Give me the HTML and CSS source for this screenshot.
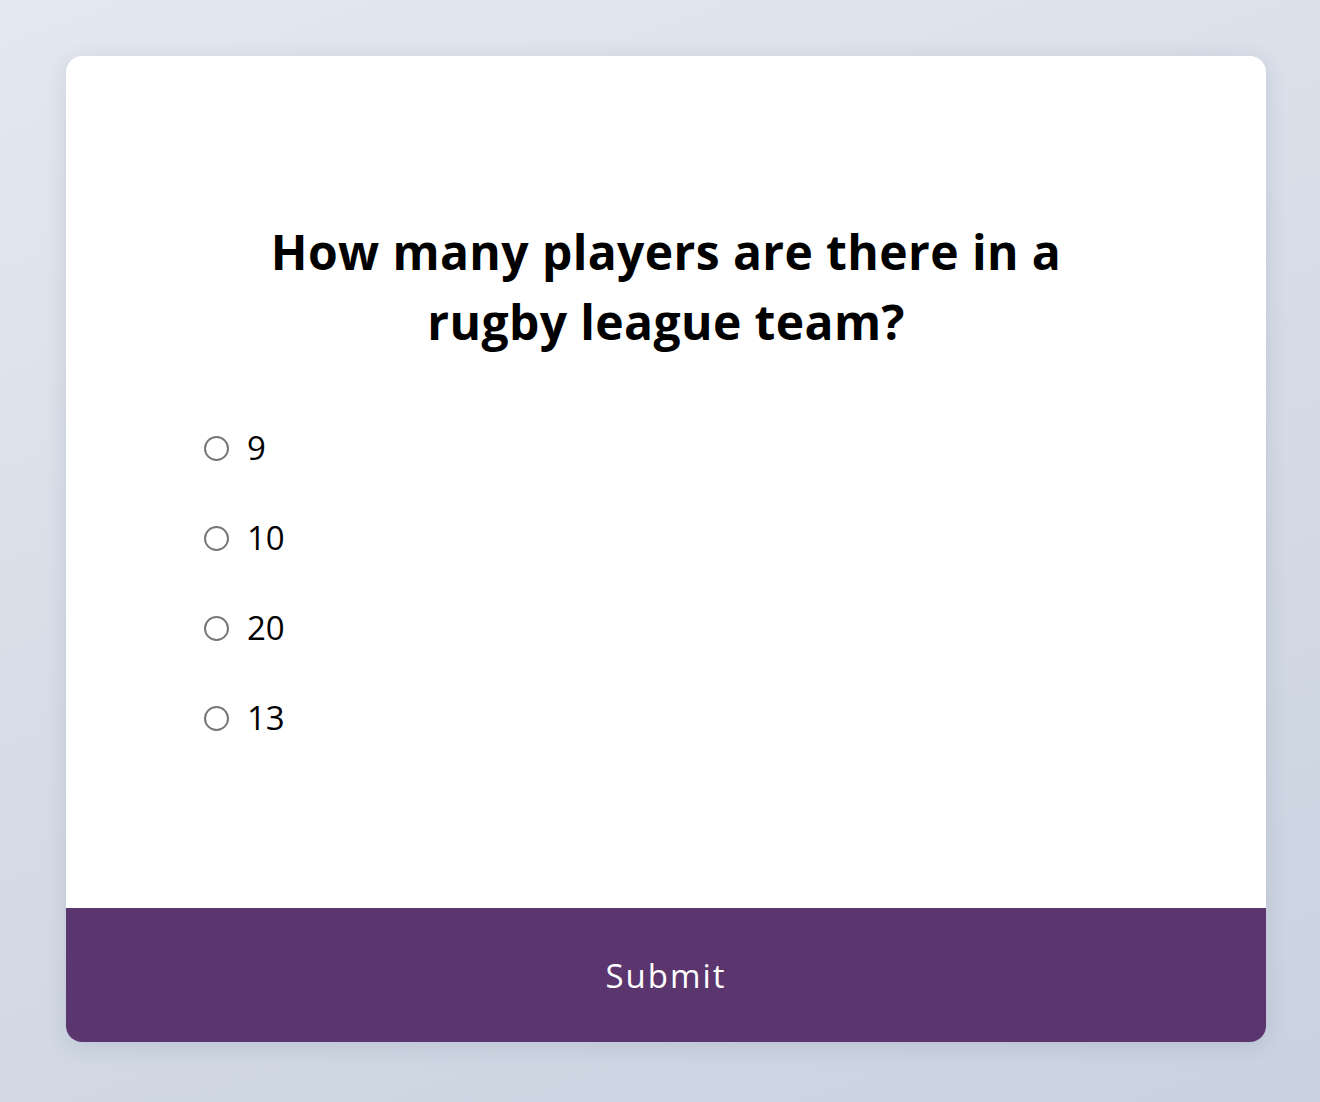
FILE: index.html
```html
<!DOCTYPE html>
<html lang="en">
<head>
<meta charset="utf-8">
<title>Quiz</title>
<link rel="stylesheet" href="styles.css">
</head>
<body>
<main class="page">
  <div class="card">
    <div class="quiz">
      <h2 class="question">How many players are there in a rugby league team?</h2>
      <ul class="answers">
        <li class="answer"><input type="radio" name="answer" id="a" class="radio"><label for="a">9</label></li>
        <li class="answer"><input type="radio" name="answer" id="b" class="radio"><label for="b">10</label></li>
        <li class="answer"><input type="radio" name="answer" id="c" class="radio"><label for="c">20</label></li>
        <li class="answer"><input type="radio" name="answer" id="d" class="radio"><label for="d">13</label></li>
      </ul>
    </div>
    <button class="submit" type="button">Submit</button>
  </div>
</main>
</body>
</html>
```

FILE: styles.css
```css
* { box-sizing: border-box; }
html, body { margin: 0; height: 100%; }
body {
  font-family: "Open Sans", "Liberation Sans", sans-serif;
  background: linear-gradient(160deg, #e4e8f0 0%, #d6dce7 50%, #cad2e0 100%);
  min-height: 1102px;
}
.page {
  padding: 56px 0 0 12px;
  display: flex;
  justify-content: center;
}
.card {
  width: 1200px;
  background: #fff;
  border-radius: 16px;
  box-shadow: 0 4px 22px rgba(60, 70, 100, 0.14);
  overflow: hidden;
}
.quiz {
  padding: 161px 138px 166px;
}
.question {
  margin: 0;
  text-align: center;
  font-size: 48px;
  line-height: 70px;
  font-weight: 700;
  color: #000;
  letter-spacing: 0.4px;
  padding: 0 56px;
}
.answers {
  list-style: none;
  margin: 67px 0 0;
  padding: 0;
  display: flex;
  flex-direction: column;
  gap: 42px;
}
.answer {
  display: flex;
  align-items: center;
  height: 48px;
  font-size: 33px;
  line-height: 48px;
  color: #000;
}
.radio {
  appearance: none;
  -webkit-appearance: none;
  width: 25px;
  height: 25px;
  margin: 0 18px 0 0;
  border: 2px solid #777;
  border-radius: 50%;
  background: #fff;
}
.submit {
  display: block;
  width: 100%;
  height: 134px;
  border: 0;
  margin: 0;
  background: #5b356e;
  color: #fff;
  font-family: inherit;
  font-size: 33px;
  letter-spacing: 2px;
  font-weight: 400;
}
```
